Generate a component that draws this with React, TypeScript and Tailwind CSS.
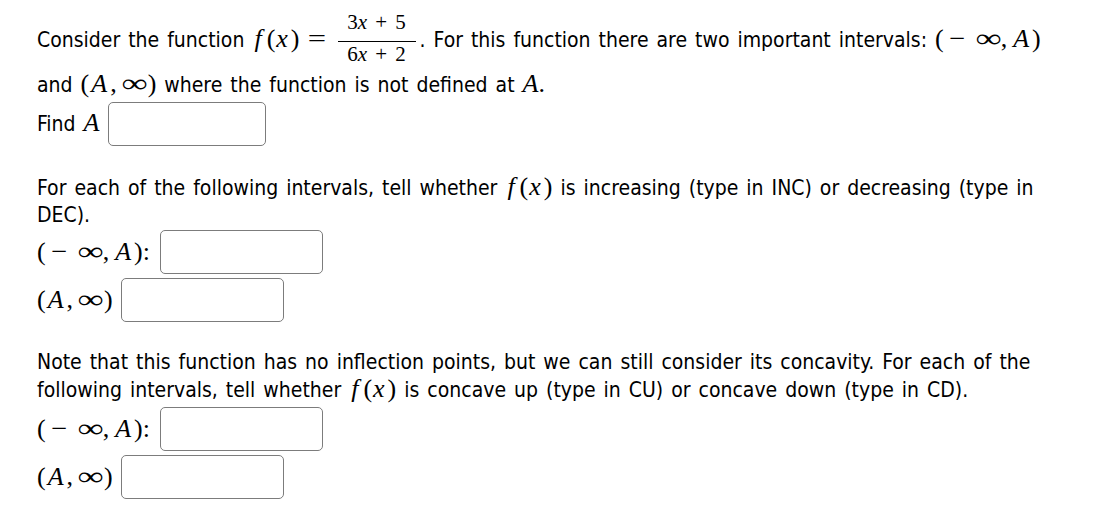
import React from 'react';

const M: React.FC<{ children: React.ReactNode; className?: string }> = ({ children, className = '' }) => (
  <span className={`font-['Liberation_Serif',serif] text-[26px] leading-none [word-spacing:0] ${className}`}>{children}</span>
);

const I: React.FC<{ children: React.ReactNode; className?: string }> = ({ children, className = '' }) => (
  <i className={className}>{children}</i>
);

// TeX symbols are wider than the Liberation ones
const Inf = () => <span className="inline-block w-[25px] text-center scale-x-[1.4]">∞</span>;
const Minus = () => <span className="inline-block w-[14px] text-center scale-x-[1.1]">−</span>;

const Fx = () => (
  <M>
    <I className="ml-[2px] mr-[5px]">f</I>(<I className="ml-[1px] mr-[3px]">x</I>)
  </M>
);

const NegInf = ({ colon = false }: { colon?: boolean }) => (
  <M>
    (<span className="ml-[6px]"><Minus /></span>
    <span className="ml-[12px]">
      <Inf />
    </span>
    ,<I className="ml-[6px] mr-[3px]">A</I>){colon ? ':' : ''}
  </M>
);

const InfA = () => (
  <M>
    (<I className="ml-[2px] mr-[3px]">A</I>,
    <span className="ml-[5px] mr-[1px]">
      <Inf />
    </span>
    )
  </M>
);

const Box = ({ w = 'w-[158px]' }: { w?: string }) => (
  <input type="text" className={`${w} h-[44px] rounded-[5px] border border-[#7c7c7c] bg-white outline-none`} />
);

export default function App() {
  return (
    <div className="min-h-screen bg-white text-black font-['DejaVu_Sans_Condensed','DejaVu_Sans',sans-serif] text-[21px] leading-[27px] [word-spacing:2px]">
      <div className="w-[1075px] pl-[37px] pt-[12px]">
        <p>
          Consider the function <Fx />
          <M className="ml-[8px]">
            <span className="inline-block w-[18px] text-center scale-x-[1.25]">=</span>
          </M>
          <span className="ml-[12px] inline-flex w-[78px] flex-col items-center align-[18px] font-['Liberation_Serif',serif] text-[21px] leading-[20px] [word-spacing:0]">
            <span className="pb-[9px]">
              3<I>x</I> <span className="mx-[3px]">+</span> 5
            </span>
            <span className="block h-[1px] w-full bg-black" />
            <span className="pt-[2px] pb-[7px]">
              6<I>x</I> <span className="mx-[3px]">+</span> 2
            </span>
          </span>
          <span className="ml-[4px]">.</span> For this function there are two important intervals: <NegInf /> and{' '}
          <InfA /> where the function is not defined at{' '}
          <M>
            <I>A</I>.
          </M>
        </p>
        <div className="mt-[3px] flex items-center gap-[6px]">
          <span>
            Find{' '}
            <M>
              <I className="mr-[3px]">A</I>
            </M>
          </span>
          <Box />
        </div>

        <p className="mt-[28px]">
          For each of the following intervals, tell whether <Fx /> is increasing (type in INC) or decreasing (type in
          DEC).
        </p>
        <div className="mt-[1px] flex items-center gap-[10px]">
          <NegInf colon />
          <Box w="w-[163px]" />
        </div>
        <div className="mt-[4px] flex items-center gap-[8px]">
          <InfA />
          <Box w="w-[163px]" />
        </div>

        <p className="mt-[27px]">
          Note that this function has no inflection points, but we can still consider its concavity. For each of the
          following intervals, tell whether <Fx /> is concave up (type in CU) or concave down (type in CD).
        </p>
        <div className="mt-[3px] flex items-center gap-[10px]">
          <NegInf colon />
          <Box w="w-[163px]" />
        </div>
        <div className="mt-[4px] flex items-center gap-[8px]">
          <InfA />
          <Box w="w-[163px]" />
        </div>
      </div>
    </div>
  );
}
